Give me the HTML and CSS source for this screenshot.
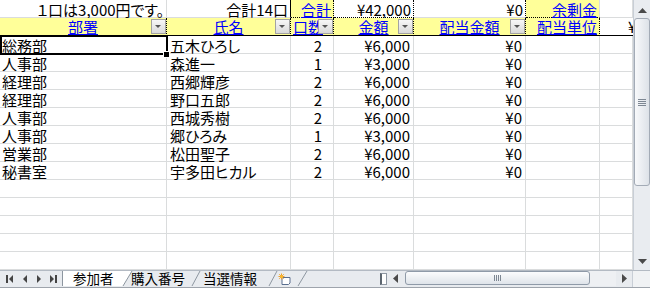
FILE: index.html
```html
<!DOCTYPE html>
<html lang="ja">

<head>
    <meta charset="UTF-8">
    <meta name="viewport" content="width=device-width, initial-scale=1.0">
    <link rel="stylesheet" href="styles.css">
</head>

<body>
    <div id="window">
        <div class="main">
            <div class="sheet">
                <div class="row">
                    <div class="c r">１口は3,000円です。</div>
                    <div class="c r edge">合計14口</div>
                    <div class="c r note dot-r dot-b">合計</div>
                    <div class="c r dot-r dot-b">¥42,000</div>
                    <div class="c r dot-r">¥0</div>
                    <div class="c r note dot-b">余剰金</div>
                    <div class="c"></div>
                </div>
                <div class="row head">
                    <div class="c"><span class="title">部署</span><span class="filter"></span></div>
                    <div class="c"><span class="title">氏名</span><span class="filter"></span></div>
                    <div class="c l"><span class="title">口数</span><span class="filter"></span></div>
                    <div class="c"><span class="title">金額</span><span class="filter"></span></div>
                    <div class="c"><span class="title">配当金額</span><span class="filter"></span></div>
                    <div class="c r"><span class="title">配当単位</span></div>
                    <div class="c cut">¥</div>
                </div>
                <div class="row data">
                    <div class="c">総務部</div>
                    <div class="c">五木ひろし</div>
                    <div class="c">2</div>
                    <div class="c">¥6,000</div>
                    <div class="c">¥0</div>
                    <div class="c"></div>
                    <div class="c"></div>
                    <div class="sel"><span class="handle"></span></div>
                </div>
                <div class="row data">
                    <div class="c">人事部</div>
                    <div class="c">森進一</div>
                    <div class="c">1</div>
                    <div class="c">¥3,000</div>
                    <div class="c">¥0</div>
                    <div class="c"></div>
                    <div class="c"></div>
                </div>
                <div class="row data">
                    <div class="c">経理部</div>
                    <div class="c">西郷輝彦</div>
                    <div class="c">2</div>
                    <div class="c">¥6,000</div>
                    <div class="c">¥0</div>
                    <div class="c"></div>
                    <div class="c"></div>
                </div>
                <div class="row data">
                    <div class="c">経理部</div>
                    <div class="c">野口五郎</div>
                    <div class="c">2</div>
                    <div class="c">¥6,000</div>
                    <div class="c">¥0</div>
                    <div class="c"></div>
                    <div class="c"></div>
                </div>
                <div class="row data">
                    <div class="c">人事部</div>
                    <div class="c">西城秀樹</div>
                    <div class="c">2</div>
                    <div class="c">¥6,000</div>
                    <div class="c">¥0</div>
                    <div class="c"></div>
                    <div class="c"></div>
                </div>
                <div class="row data">
                    <div class="c">人事部</div>
                    <div class="c">郷ひろみ</div>
                    <div class="c">1</div>
                    <div class="c">¥3,000</div>
                    <div class="c">¥0</div>
                    <div class="c"></div>
                    <div class="c"></div>
                </div>
                <div class="row data">
                    <div class="c">営業部</div>
                    <div class="c">松田聖子</div>
                    <div class="c">2</div>
                    <div class="c">¥6,000</div>
                    <div class="c">¥0</div>
                    <div class="c"></div>
                    <div class="c"></div>
                </div>
                <div class="row data">
                    <div class="c">秘書室</div>
                    <div class="c">宇多田ヒカル</div>
                    <div class="c">2</div>
                    <div class="c">¥6,000</div>
                    <div class="c">¥0</div>
                    <div class="c"></div>
                    <div class="c"></div>
                </div>
                <div class="row">
                    <div class="c"></div><div class="c"></div><div class="c"></div><div class="c"></div><div class="c"></div><div class="c"></div><div class="c"></div>
                </div>
                <div class="row">
                    <div class="c"></div><div class="c"></div><div class="c"></div><div class="c"></div><div class="c"></div><div class="c"></div><div class="c"></div>
                </div>
                <div class="row">
                    <div class="c"></div><div class="c"></div><div class="c"></div><div class="c"></div><div class="c"></div><div class="c"></div><div class="c"></div>
                </div>
                <div class="row">
                    <div class="c"></div><div class="c"></div><div class="c"></div><div class="c"></div><div class="c"></div><div class="c"></div><div class="c"></div>
                </div>
                <div class="row">
                    <div class="c"></div><div class="c"></div><div class="c"></div><div class="c"></div><div class="c"></div><div class="c"></div><div class="c"></div>
                </div>
            </div>

            <div class="vscroll">
                <div class="vbtn up">
                    <svg width="9" height="5" viewBox="0 0 9 5"><polygon points="0,5 9,5 4.5,0" fill="#4a4a4a"/></svg>
                </div>
                <div class="vthumb">
                    <svg width="8" height="7" viewBox="0 0 8 7">
                        <path d="M0 0.5 H8 M0 2.5 H8 M0 4.5 H8 M0 6.5 H8" stroke="#7d8793"/>
                    </svg>
                </div>
                <div class="vtrack"></div>
                <div class="vbtn down">
                    <svg width="9" height="5" viewBox="0 0 9 5"><polygon points="0,0 9,0 4.5,5" fill="#4a4a4a"/></svg>
                </div>
            </div>
        </div>

        <div class="tabbar">
            <div class="nav">
                <svg width="62" height="15" viewBox="0 0 62 15">
                    <rect x="6" y="4" width="2" height="8" fill="#444"/>
                    <polygon points="13,4 13,12 9,8" fill="#444"/>
                    <polygon points="27,4 27,12 23,8" fill="#444"/>
                    <polygon points="37,4 37,12 41,8" fill="#444"/>
                    <polygon points="50,4 50,12 54,8" fill="#444"/>
                    <rect x="55" y="4" width="2" height="8" fill="#444"/>
                </svg>
            </div>
            <div class="tabs">
                <svg class="tab-shapes" width="319" height="15" viewBox="0 0 319 15">
                    <polygon points="0,0 70,0 61,15 0,15" fill="#fff"/>
                    <line x1="0.5" y1="0" x2="0.5" y2="15" stroke="#8d96a0"/>
                    <line x1="70" y1="0" x2="61" y2="15" stroke="#8d96a0"/>
                    <line x1="138" y1="0" x2="130" y2="15" stroke="#8d96a0"/>
                    <line x1="215" y1="0" x2="207" y2="15" stroke="#8d96a0"/>
                    <line x1="245" y1="0" x2="236" y2="15" stroke="#8d96a0"/>
                </svg>
                <span class="tab first">参加者</span>
                <span class="tab second">購入番号</span>
                <span class="tab third">当選情報</span>
                <span class="tab new">
                    <svg width="13" height="12" viewBox="0 0 13 12">
                        <path d="M4 4.5 H12 V10 L10.5 11.5 H4 Z" fill="#fff" stroke="#5a6f8f"/>
                        <path d="M3.5 0.5 V6.5 M0.5 3.5 H6.5 M1.3 1.3 L5.7 5.7 M5.7 1.3 L1.3 5.7" stroke="#f2a023" stroke-width="1"/>
                        <circle cx="3.5" cy="3.5" r="1.6" fill="#f7b733"/>
                    </svg>
                </span>
            </div>
            <div class="splitter"></div>
            <div class="hscroll">
                <div class="hbtn">
                    <svg width="5" height="9" viewBox="0 0 5 9"><polygon points="5,0 5,9 0,4.5" fill="#4a4a4a"/></svg>
                </div>
                <div class="hthumb">
                    <svg width="7" height="6" viewBox="0 0 7 6">
                        <path d="M0.5 0 V6 M2.5 0 V6 M4.5 0 V6 M6.5 0 V6" stroke="#7d8793"/>
                    </svg>
                </div>
                <div class="htrack"></div>
                <div class="hbtn">
                    <svg width="5" height="9" viewBox="0 0 5 9"><polygon points="0,0 0,9 5,4.5" fill="#4a4a4a"/></svg>
                </div>
            </div>
            <div class="corner"></div>
        </div>
    </div>
</body>

</html>
```

FILE: styles.css
```css
body {
    margin: 0;
    font-family: "Noto Sans CJK JP", sans-serif;
    font-size: 15px;
    font-feature-settings: "palt";
    color: #000;
    background-color: #fff;
}

#window {
    width: 650px;
    height: 288px;
    overflow: hidden;
}

.main {
    display: flex;
    height: 270px;
}

/* grid */

.sheet {
    width: 633px;
    height: 270px;
    overflow: hidden;
}

.row {
    display: grid;
    grid-template-columns: 167px 124px 43px 80px 112px 74px 33px;
    height: 18px;
    position: relative;
}

.c {
    position: relative;
    box-sizing: border-box;
    height: 18px;
    padding: 2px 2px 0;
    line-height: 16px;
    border-right: 1px solid #dadcdd;
    border-bottom: 1px solid #dadcdd;
    white-space: nowrap;
}

.r {
    text-align: right;
}

.l {
    text-align: left;
}

.edge {
    border-right-color: #000;
}

.dot-r {
    border-right: 1px dotted #000;
}

.dot-b {
    border-bottom: 1px dotted #000;
}

.note {
    background-color: #ffff99;
    color: #0000ff;
    text-decoration: underline;
    text-underline-offset: 1px;
}

.head .c {
    padding-top: 1px;
    text-align: center;
    background-color: #ffff99;
    border-right: 1px dotted #000;
    border-bottom: 1px solid #000;
}

.head .c.l {
    text-align: left;
    padding-left: 2px;
    font-feature-settings: normal;
}

.head .c.r {
    text-align: right;
}

.head .c.cut {
    background-color: #fff;
    text-align: left;
    padding-left: 28px;
    border-right: none;
}

.title {
    color: #0000ff;
    text-decoration: underline;
    text-underline-offset: 1px;
}

.filter {
    position: absolute;
    top: 1px;
    right: 0;
    width: 15px;
    height: 15px;
    box-sizing: border-box;
    border: 1px solid #a3a3a3;
    background: linear-gradient(#f7f7f7, #dadada);
}

.filter::after {
    content: "";
    position: absolute;
    left: 3px;
    top: 5px;
    border-left: 3px solid transparent;
    border-right: 3px solid transparent;
    border-top: 3px solid #555;
}

.data .c:nth-child(2) {
    padding-left: 3px;
}

.data .c:nth-child(3) {
    text-align: right;
    padding-right: 11px;
}

.data .c:nth-child(4),
.data .c:nth-child(5) {
    text-align: right;
    padding-right: 3px;
}

.sel {
    position: absolute;
    z-index: 2;
    top: -1px;
    left: 0;
    width: 168px;
    height: 20px;
    box-sizing: border-box;
    border: 2px solid #000;
}

.handle {
    position: absolute;
    left: 161px;
    top: 14px;
    width: 5px;
    height: 5px;
    background-color: #000;
    border: 1px solid #fff;
}

/* vertical scrollbar */

.vscroll {
    width: 17px;
    height: 270px;
    box-sizing: border-box;
    border-left: 1px solid #c8ced6;
    background-color: #e9ecf0;
    display: flex;
    flex-direction: column;
}

.vbtn {
    height: 17px;
    display: flex;
    justify-content: center;
    align-items: center;
}

.vbtn.up {
    padding-top: 4px;
    box-sizing: border-box;
}

.vthumb {
    height: 168px;
    margin: 1px 0 0 0;
    box-sizing: border-box;
    border: 1px solid #a3abb6;
    border-radius: 3px;
    background: linear-gradient(to right, #f8f9fb, #dde2e8);
    display: flex;
    justify-content: center;
    align-items: center;
}

.vtrack {
    flex: 1;
}

/* sheet tabs */

.tabbar {
    display: flex;
    height: 16px;
    box-sizing: content-box;
    border-top: 1px solid #b3bac3;
    border-bottom: 2px solid #9ea4ac;
    background-color: #e8ebef;
    font-size: 13.5px;
    line-height: 13px;
}

.nav {
    width: 62px;
    height: 15px;
}

.tabs {
    position: relative;
    width: 319px;
    height: 15px;
    display: flex;
}

.tab-shapes {
    position: absolute;
    left: 0;
    top: 0;
}

.tab {
    position: relative;
    box-sizing: border-box;
    white-space: nowrap;
    padding-top: 1px;
}

.tab.first {
    width: 69px;
    padding-left: 11px;
}

.tab.second {
    width: 72px;
}

.tab.third {
    width: 75px;
}

.tab.new {
    padding-top: 2px;
}

.splitter {
    width: 7px;
    height: 12px;
    margin-top: 2px;
    box-sizing: border-box;
    border: 1px solid #8e97a2;
    border-left: 2px solid #5d6670;
    background-color: #fff;
}

.hscroll {
    width: 245px;
    height: 15px;
    display: flex;
}

.hbtn {
    width: 16px;
    display: flex;
    justify-content: center;
    align-items: center;
}

.hthumb {
    width: 185px;
    height: 14px;
    margin-left: 2px;
    box-sizing: border-box;
    border: 1px solid #8f9aa8;
    border-radius: 3px;
    background: linear-gradient(#fbfcfd, #dfe4ea);
    display: flex;
    justify-content: center;
    align-items: center;
}

.htrack {
    flex: 1;
    background-color: #eef0f3;
}

.corner {
    width: 17px;
    border-left: 1px solid #c8ced6;
    background-color: #f0f2f4;
}
```
